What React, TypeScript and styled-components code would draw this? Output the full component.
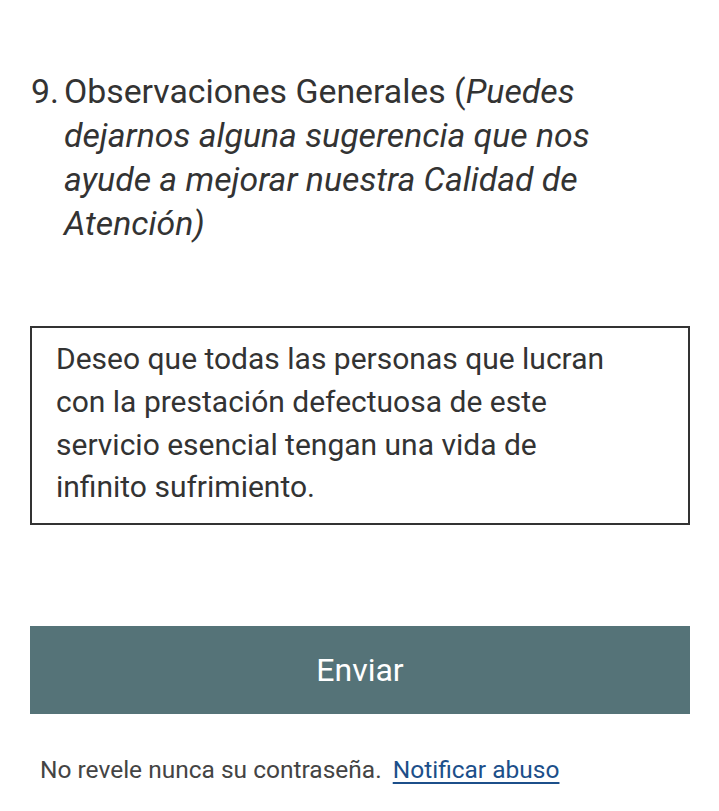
import React from 'react'
import styled, { createGlobalStyle } from 'styled-components'

const GlobalStyle = createGlobalStyle`
    html, body {
        margin: 0;
        padding: 0;
        background: #ffffff;
    }
    body {
        font-family: Roboto, "Noto Sans", "Liberation Sans", sans-serif;
        color: #333333;
    }
`

const Page = styled.main`
    display: flex;
    flex-direction: column;
    padding: 70px 29px 0 30px;
`

const Question = styled.div`
    display: flex;
    font-size: 33.8px;
    line-height: 44px;
    color: #333333;
    .num{
        flex: none;
        width: 34px;
        padding-left: 1px;
        box-sizing: border-box;
    }
    .label{
        flex: 1;
        padding-right: 56px;
    }
    em{
        font-style: italic;
    }
`

const AnswerBox = styled.div`
    margin-top: 80px;
    border: 2px solid #333333;
    padding: 10px 70px 10px 24px;
    font-size: 30px;
    line-height: 42.8px;
    color: #333333;
    box-sizing: border-box;
    height: 199px;
`

const SubmitButton = styled.button`
    margin-top: 101px;
    height: 88px;
    border: none;
    background: #557378;
    color: #ffffff;
    font-family: Roboto, "Noto Sans", "Liberation Sans", sans-serif;
    font-size: 32px;
    cursor: pointer;
`

const Footer = styled.p`
    margin: 41px 0 0 10px;
    font-size: 24.5px;
    line-height: 30px;
    color: #444444;
    a{
        margin-left: 5px;
        color: #1c4f8a;
        text-decoration: underline;
        text-decoration-thickness: 2px;
        text-underline-offset: 4px;
    }
`

export default function App() {
    return (
        <>
            <GlobalStyle />
            <Page>
                <Question>
                    <span className="num">9.</span>
                    <span className="label">
                        Observaciones Generales (<em>Puedes dejarnos alguna sugerencia que nos ayude a mejorar nuestra Calidad de Atención)</em>
                    </span>
                </Question>
                <AnswerBox>
                    Deseo que todas las personas que lucran con la prestación defectuosa de este servicio esencial tengan una vida de infinito sufrimiento.
                </AnswerBox>
                <SubmitButton>Enviar</SubmitButton>
                <Footer>
                    No revele nunca su contraseña. <a href="#">Notificar abuso</a>
                </Footer>
            </Page>
        </>
    )
}
